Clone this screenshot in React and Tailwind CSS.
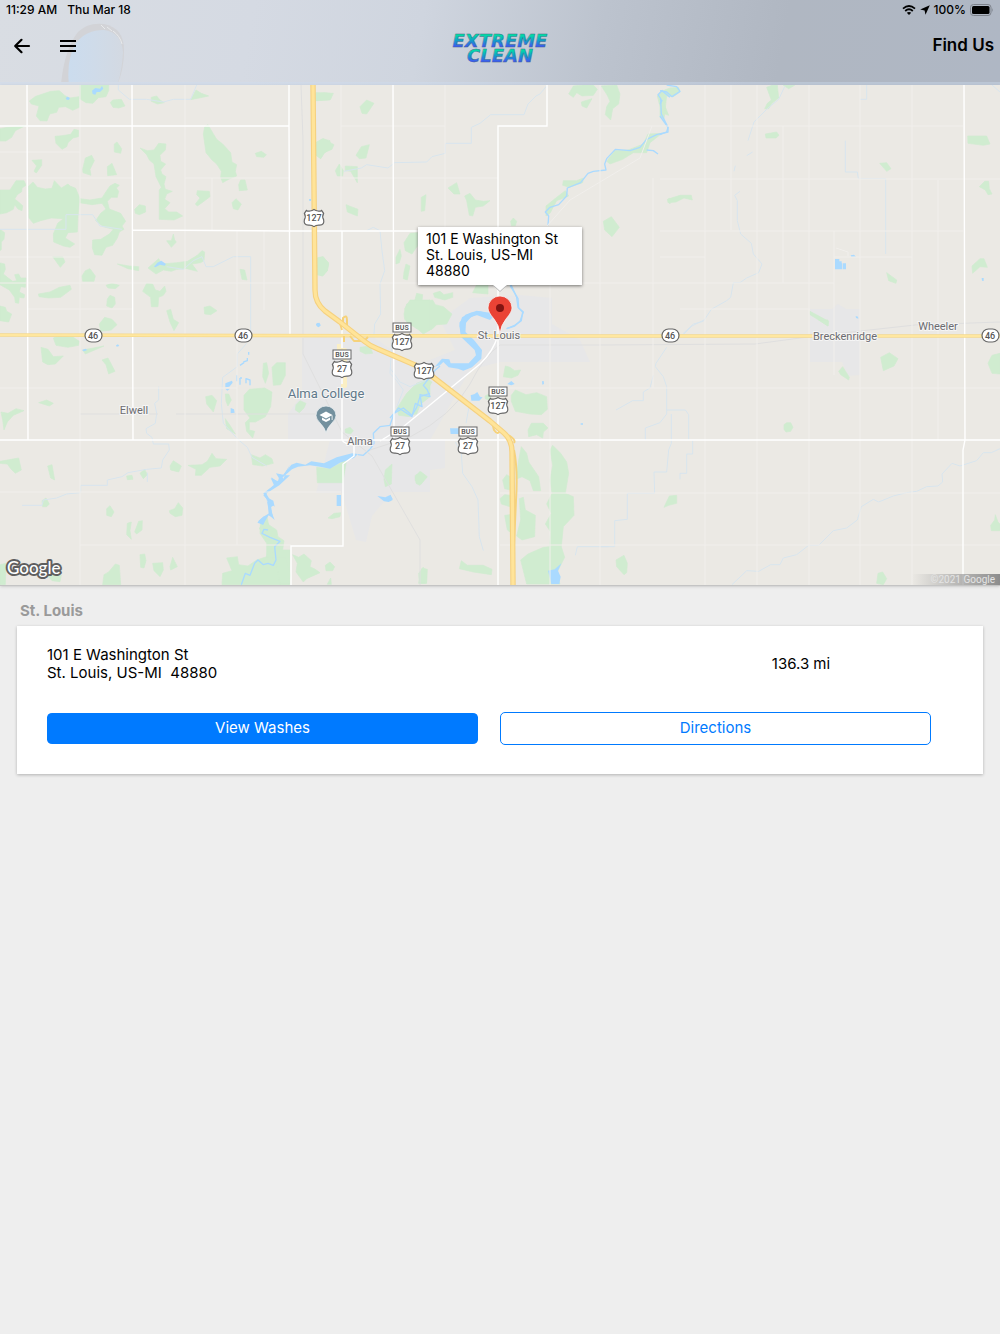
import React from 'react';

// Land features are traced in tiles at three units per map unit
const mapTiles = [
  {
    x: 0,
    y: 84,
    parks:
      'M88 51L107 37 152 22 178 20 195 35 209 42 237 38 238 70 218 79 197 68 176 70 170 85 149 90 141 111 120 110 109 96 117 66 94 60ZM239 3H326V20L318 38 295 41 279 58 258 56 239 44ZM331 56L338 48 364 46 375 66 356 72 339 70ZM0 134L22 130 76 125 46 140 35 160 18 171 0 171ZM165 157L186 155 212 151 222 136 236 139 235 158 219 162 204 176 200 188 186 196 168 178ZM96 229L125 227 125 244 109 267 102 262 110 246ZM343 180L351 174 365 194 362 208 343 204ZM248 256L256 222 275 214 283 230 270 256 273 274 249 266ZM322 248L336 238 350 272 323 275ZM0 318L30 318 48 290 72 290 78 304 66 312 65 323 52 332 44 345 53 352 68 365 66 380 54 375 44 362 40 376 20 386 0 390ZM86 306L99 294 112 310 136 315 156 313 163 290 184 312 204 300 210 306 227 313 240 344 270 348 306 342 320 320 330 306 345 298 358 304 349 312 356 322 352 340 334 340 322 352 328 375 362 388 377 412 366 426 372 436 358 444 352 462 338 484 318 490 306 514 284 512 277 492 278 468 302 466 328 450 340 436 310 428 287 410 302 388 318 375 306 358 276 362 238 356 234 396 232 444 204 446 196 462 224 480 210 490 190 486 161 474 160 450 173 418 190 404 154 402 122 410 100 418 87 402ZM158 518L188 518 195 534 181 550ZM0 436L14 446 12 466 4 474 4 496 0 500ZM0 537L14 540 16 556 10 570 22 580 38 592 50 590 44 572 56 570 62 582 78 582 76 610 62 608 58 624 74 632 72 642 58 640 56 658 46 656 44 640 28 618 0 602ZM246 576L256 560 270 554 286 576 282 592 248 592ZM318 604L336 598 358 604 346 614 324 612ZM115 630L150 624 178 610 210 604 214 616 182 640 146 642 117 638ZM0 666L16 670 20 682 35 690 26 714 0 710ZM322 645L330 634 344 640 346 660 336 672 320 666ZM298 720L314 700 336 706 351 722 334 738 302 742ZM454 40L470 36 480 48 493 56 472 60 454 52ZM572 47L588 18 604 28 626 36 598 42ZM420 192L442 200 462 198 476 178 498 180 496 198 480 214 482 232 497 240 482 258 486 270 498 278 492 300 496 316 517 322 500 330 494 346 510 356 494 374 506 384 530 384 548 396 522 408 478 406 478 318 484 310 468 278 462 240 448 228 440 212ZM610 150L614 128 624 122 638 146 650 166 668 180 692 206 696 234 710 242 706 262 710 276 686 286 668 296 662 280 664 262 650 240 636 228 618 206ZM716 302L722 288 735 288 742 318 718 320ZM592 320L628 322 630 338 606 356 592 366 586 360 600 342 590 332ZM696 356L708 344 724 360 714 378 700 374ZM766 208L784 202 799 212 792 220 770 218ZM404 376L418 362 436 366 437 384 418 392 406 388ZM500 470L514 470 520 450 524 468 529 474 514 490ZM444 552L476 524 486 540 530 536 562 532 592 514 606 500 614 504 612 530 602 536 576 540 592 562 560 554 530 556 514 562 490 558 468 570ZM352 540L388 546 416 548 416 560 384 554ZM428 622L440 598 458 600 466 618 480 622 494 606 498 622 490 634 476 640 474 668 454 668 452 640ZM720 556L734 558 741 588 726 586ZM612 670L630 666 651 680 632 692 614 690ZM500 680L512 676 520 706 536 716 522 740 510 714ZM947 28L975 26 990 28 990 48 950 50ZM947 176L968 164 990 170 990 196 974 206 962 224 948 212ZM950 524L970 518 986 540 982 560 968 576 950 570Z',
    water: 'M197 42L203 38 210 42 206 48 200 47ZM276 20L286 12 300 14 306 6 310 14 300 24 290 24 286 32 278 30ZM462 548L472 536 484 530 498 540 494 545 480 542 466 550ZM948 720L956 716 962 724 956 728ZM928 345h5v5h-5Z',
    streams: 'M355 3V18L388 46H440L490 54 520 46H572L590 3M0 436H198V392H278L300 426 366 436M500 548L550 556 580 530 606 518 618 548 640 548 700 518H752V750',
  },
  {
    x: 300,
    y: 84,
    parks:
      'M48 26L100 28 92 46 48 50ZM180 68L200 48 222 58 200 90 186 88ZM48 176L70 164 102 182 96 196 72 206 62 224 48 214ZM168 214L184 188 208 182 198 222 178 224ZM106 260L118 240 130 260 128 276 112 276ZM136 246L172 248 172 296 152 262 136 260ZM138 362L174 376 172 396 142 384ZM50 522L68 518 86 536 82 560 68 576 50 572ZM444 312L470 296 480 330 462 330ZM364 340L378 332 374 380 364 382ZM494 336L510 328 526 348 550 352 570 350 550 366 526 370 518 396 508 394 500 350ZM806 30L820 6 850 3H880L892 16 880 34 846 36 830 26 820 40ZM844 54L876 44 860 72 846 66ZM904 6L950 3 960 30 956 60 938 74 932 108 916 92 920 68 930 52 922 34ZM1072 36L1086 18 1108 26 1086 44 1106 94 1088 88 1078 60ZM920 232L944 200 984 198 1030 180 1044 150 1086 148 1050 176 1040 206 1000 206 968 226 930 240ZM790 290L830 290 850 282 848 296 808 310 788 304ZM738 366L770 340 796 320 806 336 770 350 750 388 738 396ZM910 412L934 398 958 430 936 458 914 438ZM632 412L640 402 650 412 646 425 634 425ZM312 476L330 448 352 446V486L336 510 316 500ZM288 520L300 496 304 516 298 536 288 540ZM312 564L318 540 330 546 322 588 310 584ZM518 626L530 602H564V630ZM312 690L320 660 344 650 350 628 368 632 366 652 398 648 406 662 430 668 456 690 440 720 410 722 396 736 380 740 350 734 326 718 314 706ZM400 628L420 622 432 632 458 626 458 640 434 648 404 640ZM1104 346L1110 342V360Z',
    water: 'M478 725L486 700 512 686 540 682 570 690 566 702 536 692 514 698 498 716 496 750 482 750ZM48 720L58 716 62 724 56 730 50 726ZM28 345h5v5h-5Z',
    streams: 'M740 6L720 30 708 36 684 60 672 92H572L540 118 514 130V178H436V208L396 218 380 234 284 236 264 252 200 242 184 252 132 262M200 440L220 430 240 440 246 500 254 560 240 600 242 690 224 720 222 750',
    rivers: 'M1110 40L1086 20 1074 32 1082 44 1084 90 1104 130 1104 144 1070 152 1040 166 1020 190 990 200 946 196 920 224 914 240 918 258 880 262 864 268 842 296 802 312 800 336 776 362 750 370 736 384 746 396 744 424M1040 198L1060 200 1074 210M632 600L650 640 654 670 668 684 664 710 644 724 620 734',
  },
  {
    x: 660,
    y: 84,
    parks:
      'M320 10L336 4H352L356 42 336 58 326 74 314 74 322 58 334 48ZM370 4H404L386 14ZM316 150L350 144 357 154 348 162 318 162ZM22 346L60 334 94 334 97 348 72 342 48 354 24 356ZM659 238L680 236 693 254 680 262ZM923 156L980 156 990 180 970 184 924 178ZM958 308L974 292 986 292 988 314 996 330 984 332 976 318ZM936 546L960 524 972 524 982 550 960 548 938 568ZM680 566L710 588 708 598 686 590ZM450 682L506 712 504 726 476 708 450 692ZM0 38L14 18 30 12 56 10 60 24 40 38 20 36 12 106 0 100Z',
    water: 'M525 525H538V532H545V556H525ZM537 538H546V556H537ZM548 538H558V556H548ZM572 514L582 512 588 518 574 519ZM587 696L594 698 595 704 588 702ZM965 582L971 582 971 591 966 590Z',
    streams: 'M374 8L356 46 322 74 282 114 264 170M278 204L260 215M240 322L224 334 232 350V410L242 450 274 478 280 510 306 540 296 566 260 582 240 596H220L212 640 200 650 154 676 130 712 100 720 68 750M620 3V46H600M556 170V264H592L595 284H677V510M996 3L1020 24M226 245L222 262',
    rivers: 'M0 20L20 24 36 38 60 22 50 8 20 3M0 60L6 50 0 44M0 96L24 130 20 144 0 152',
  },
  {
    x: 0,
    y: 330,
    parks:
      'M160 24L174 18H214L238 34 236 46 204 52 168 46ZM123 52L144 58 160 80 190 78 166 102 144 104 128 96ZM248 60L312 48 270 66 256 72ZM306 90L324 84 345 124 326 132 318 104ZM116 218L140 210 160 220 148 228ZM3 246L24 250 48 236 72 242 40 256 22 276 12 300 8 270ZM0 394L56 384 64 420 46 430 32 416 22 402 0 400ZM143 408L156 404 164 450 152 444ZM126 512L138 504 148 522 140 530 128 530ZM380 438L396 436 399 448 382 449ZM420 430L434 418 442 434 430 446ZM510 408L520 392 544 408 536 426 512 420ZM564 406L606 404 622 394 636 370 648 386 680 388 660 408 630 412 604 436 586 436 588 418ZM617 200L636 196 650 212 640 246 620 222ZM676 192L686 192 694 210 684 228 678 214ZM790 100L800 98 806 130 796 160 788 140ZM816 112L830 98 856 98 856 136 842 164 820 166ZM732 196L748 178 794 174 816 186 812 230 796 260 766 276 748 276 748 300 764 304 758 324 740 304 736 278 750 264 732 240ZM676 266L690 286 706 312 680 296ZM754 374L780 384 796 374 816 386 820 400 788 408 758 404ZM508 542L524 536 535 518 548 534 546 556 526 560 510 550ZM320 536L330 527 342 546 334 560 320 556ZM382 580L394 576 390 602 394 628 380 614ZM404 606L416 574 427 572 426 600 410 612ZM308 764L312 734 326 726 346 702 358 706 362 764ZM420 674L434 672 438 692 432 714 422 712ZM458 700L488 698 490 720 480 740 462 722ZM510 710L518 682 532 710 512 720ZM680 684L712 680 716 704 744 708 770 690 800 680 800 640 780 610 782 570 800 556 806 584 830 600 834 620 852 632 848 660 870 660V764H666L668 730 696 722ZM0 704L18 700 16 764H0ZM142 736H184L180 755 156 752Z',
    water: 'M246 60L256 56 262 60 252 64ZM348 46L354 43 358 48 350 50ZM676 160L696 152 698 158 688 170 676 172ZM676 176H690L682 182ZM692 234L702 238 704 248 692 250ZM870 404L850 436 870 436 838 466 800 490 798 500 820 512 824 530 812 520 816 550 824 570 804 552 790 584 772 578 790 560 806 554 804 516 790 490 822 466 816 452 812 444 834 454 840 432 850 446Z',
    streams: 'M740 40L712 72V110L668 142 664 220 670 280 716 330 742 352 756 382 800 408M476 170V210L464 220 470 250 466 280 438 296 440 310 456 322 460 342H506L508 360 488 390 484 414 440 418 384 428 366 440 322 450V466H242V488L200 492 170 504 130 510 126 526H66M442 428V456',
    rivers: 'M746 66V74M742 84V92L730 96M732 98L720 106M710 136V154M720 144V164M720 144H726M738 160V146L750 150V166M724 764L736 730 750 736 764 700 774 690 790 704 804 700 820 706 828 690 824 650 840 634 810 622 786 610 792 598 804 600',
  },
  {
    x: 230,
    y: 300,
    parks:
      'M390 142L420 138 428 160 406 162 390 154ZM524 26L540 0H600V90L580 102 550 76 530 66ZM345 388L360 382 370 392 362 402 346 398ZM198 314L210 302 228 310 222 324 208 338 196 330ZM500 324L540 300 556 270 580 250 600 240V290L560 322 540 350 506 346ZM462 538L466 510 486 492 484 552 466 560ZM556 526L574 516 592 530 574 552 556 542ZM260 502L300 506 348 480 352 470 338 548H262ZM294 654L312 640 332 638 330 650 306 656ZM286 796L300 786 314 800 308 812 288 812ZM188 764L206 772 222 762 244 782 240 800 256 808 270 818 230 836 220 846 198 816 202 790ZM566 850L576 804 592 808 590 850ZM292 853L302 834 304 853ZM110 770L152 740 150 720 130 700 110 664 88 684 100 710 118 722 110 770 166 770 182 826 176 853H150L136 780Z',
    water: 'M184 494L200 488 226 494 244 484 282 490 320 472 366 460 384 462 372 474 330 488 300 506 270 500 240 496 204 500 186 508 160 530 130 560 108 580 118 596 132 616 122 622 116 604 100 586 112 572 138 550 130 546 124 532 140 544 150 540 138 520 160 524ZM110 600L122 622 130 654 116 646 98 674 84 664 100 650 118 640ZM320 585H333V618H320ZM442 588L466 592 482 584 488 600 476 606 462 604ZM258 74L264 68 270 74 264 80Z',
    streams: 'M486 120L480 220 500 242 520 270 500 322',
    rivers: 'M384 464L400 466 420 448 432 430 430 400 450 380 480 376 492 340 520 324 546 346 560 322 570 290 600 280',
  },
  {
    x: 390,
    y: 280,
    parks:
      'M340 290L346 258 360 262 374 272 392 270 384 286 364 294ZM364 346L376 330 408 344 440 338 470 350 472 388 454 404 420 402 376 394 364 364ZM414 450L424 430 460 430 474 444 460 456 458 474 440 464 416 470ZM285 348L302 340V362L286 356ZM378 598L386 540 394 500 410 520 416 546 446 590 452 632 430 632 420 602 396 590ZM480 510L488 496 512 520 530 546 536 580 526 640 550 650 552 706 520 740 514 800 524 832 500 880 510 912H410L392 840 414 822 460 802 478 800 482 756 466 732 484 700 470 672 486 640 480 600 488 556ZM388 656L400 652 406 690 436 706 434 770 396 780 380 768 392 720ZM338 600L350 584 360 590 360 630 344 626ZM330 656L344 644 360 646V680L334 672ZM344 706L360 704V756L352 750ZM208 866L214 842 232 856 280 856 306 868 304 884 250 876ZM76 590L90 574 110 592 100 602 90 616 78 610ZM24 380L50 340 80 310 110 298 126 306 100 350 80 402 50 406ZM88 910L86 880 100 862 110 884 108 910Z',
    water: 'M208 128L226 104 260 92 300 98 310 110 300 120 258 104 232 118 220 150 252 180 276 210 274 236 246 262 220 272 204 266 176 262 160 246 150 256 134 260 156 236 178 238 182 250 236 250 258 226 254 210 214 172ZM242 346L254 342 262 336 270 350 278 352 268 362 244 362ZM352 312L364 303 374 312 364 316ZM456 304L461 303 462 312 457 314ZM180 445H206V462H182ZM474 872L494 868 514 850 504 872 512 890 508 912H484ZM572 430h7v4h-7ZM0 646L8 656 0 664Z',
    streams: 'M0 264L30 306 60 320 110 300M196 486L214 520 218 580 246 620 264 660 268 770 280 812M240 364L228 430M556 826L562 800H656',
    rivers: 'M360 16L384 56 386 84 400 96 390 124 374 138 350 146M0 414L26 384 66 410 76 370 96 380 90 344 120 350 112 330 100 316 136 270 150 258',
  },
  {
    x: 600,
    y: 320,
    parks:
      'M842 112L868 98 894 116 882 138 850 152ZM716 154L728 140 748 172 746 180 722 164ZM1164 130L1176 106 1200 100V162L1176 160ZM552 314L560 308H572L579 322 572 334 558 336 552 328ZM192 562L208 528 230 526 230 550 206 556ZM48 720L72 706 82 730 80 758 72 764 50 740ZM830 790L834 760 848 756 860 776 850 794ZM1172 616L1184 600 1186 584 1194 606 1200 612V632H1174ZM656 0H684V18Z',
    water: '',
    streams:
      'M200 82L168 130 166 140 190 170 200 200V282L180 308 136 324V360M160 166L150 204 130 216V242H98L48 270M200 270H256L266 284V360M214 282V370L206 390 200 456H162L164 520H82V598L44 602V680H0M278 362V402H260V460H240V478M312 0L276 18 252 42M396 794L440 752 476 754 512 734H540L550 714 590 704 626 676H656L700 632 740 624 772 600 784 560 820 538 836 546 880 528 920 518 950 514 980 500 1014 498 1028 486 1026 462 1056 430 1080 438 1130 422 1150 398H1174L1200 386',
  },
];

const shields = [
  { x: 314, y: 218, route: '127' },
  { x: 402, y: 342, route: '127', bus: true },
  { x: 342, y: 369, route: '27', bus: true },
  { x: 424, y: 371, route: '127' },
  { x: 498, y: 406, route: '127', bus: true },
  { x: 400, y: 446, route: '27', bus: true },
  { x: 468, y: 446, route: '27', bus: true },
];

const stateRoutes = [93, 243, 670, 990];

const towns = [
  { name: 'Elwell', x: 134, y: 414 },
  { name: 'Alma', x: 360, y: 445 },
  { name: 'St. Louis', x: 499, y: 339 },
  { name: 'Breckenridge', x: 845, y: 340 },
  { name: 'Wheeler', x: 938, y: 330 },
];

const highway =
  'M313 85L315 290Q315 303 325 311L340 322 364 341Q370 346 378 349L415 365Q424 369 433 377L490 421 504 433Q512 440 512 452L513 585';
const ramps =
  'M339 320L342 330M343 326V318Q347 314 347 320V327M350 336L354 341H364L368 337M492 422L494 430Q498 436 500 430M504 434L510 436Q516 440 514 443M514 450Q518 470 516 500L514 545M344 336V342';

const TileLayer = ({ layer, ...rest }) => (
  <g {...rest}>
    {mapTiles.map((tile) => (
      <path
        key={`${tile.x}-${tile.y}`}
        transform={`translate(${tile.x} ${tile.y}) scale(0.33333)`}
        d={tile[layer]}
      />
    ))}
  </g>
);

const UsShield = ({ x, y, route, bus }) => (
  <g transform={`translate(${x} ${y})`} textAnchor="middle" fill="#555">
    <path
      d="M-9.6-4.6L-7.6-7.6Q-6-6.4-4-7Q-1.8-7.4 0-8.6Q1.8-7.4 4-7Q6-6.4 7.6-7.6L9.6-4.6Q7.8-1.4 9.6 1.6Q10.8 6.8 5.6 7.2Q2 7 0 8.6Q-2 7-5.6 7.2Q-10.8 6.8-9.6 1.6Q-7.8-1.4-9.6-4.6Z"
      fill="#fff"
      stroke="#666"
      strokeWidth="1.2"
    />
    <text y="3" fontSize="9" fontWeight="500">{route}</text>
    {bus && (
      <>
        <rect x="-9" y="-19" width="18" height="9" fill="#fff" stroke="#666" />
        <text y="-12" fontSize="7" fontWeight="600">BUS</text>
      </>
    )}
  </g>
);

const MapCanvas = () => (
  <svg
    viewBox="0 85 1000 500"
    preserveAspectRatio="xMidYMid slice"
    className="block h-full w-full font-['Roboto',sans-serif]"
    role="img"
    aria-label="Map of St. Louis and Alma"
  >
    <defs>
      <linearGradient id="copyright-fade">
        <stop offset="0" stopColor="#999" stopOpacity="0" />
        <stop offset="0.5" stopColor="#999" stopOpacity="0.6" />
        <stop offset="1" stopColor="#8c8c8c" />
      </linearGradient>
    </defs>
    <rect y="85" width="1000" height="500" fill="#ebe9e4" />

    {/* Built-up areas */}
    <g fill="#e7e7e8">
      <path d="M302 336H372L415 366 455 350 440 320 470 298 520 295 552 298V324L580 340 590 362H500L470 370 430 440H445V468L430 470V492H392L372 516 366 542 356 540 344 500V493H316L330 440H288V414L302 394Z" />
      <path d="M810 309H832L838 304 846 309H860V375L848 376 842 362H810Z" />
    </g>

    <TileLayer layer="parks" fill="#d0ecd0" stroke="#d0ecd0" strokeWidth="2" strokeLinejoin="round" />
    <TileLayer layer="streams" fill="none" stroke="#d8e5ee" strokeWidth="3" strokeLinejoin="round" />
    <TileLayer layer="water" fill="#aadaff" />
    <TileLayer layer="rivers" fill="none" stroke="#aadaff" strokeWidth="4" strokeLinejoin="round" />

    {/* Rail lines */}
    <path
      d="M80 414H158M176 414H318M303 338V354L342 432 372 456 420 540V585M500 345H600L755 344 815 336 915 325 1000 322M500 345Q484 356 470 384Q452 416 410 437L370 450M301 85L303 140V335"
      fill="none"
      stroke="#dfdfdf"
    />

    {/* Back roads */}
    <path
      d="M80 85V585M185 85V585M212 178V230M237 230V545M264 230V310M445 85V230M600 85V585M653 178V388M705 85V585M731 85V230M757 85V585M783 126V283M809 85V585M834 231V375M860 85V585M912 85V585M938 180V440M550 283V585M341 85V231M0 152H80M0 178H132M185 178H289M341 126H445M600 126H963M660 179H1000M0 257H80M0 283H289M341 283H418M582 283H834M28 309H132M660 231H963M660 257H705M834 257H912M680 309H810M0 388H237M500 388H1000M0 492H341M500 493H1000M80 545H291M500 545H1000M341 178H498M836 248L848 252V256"
      fill="none"
      stroke="#f1efec"
    />
    <path d="M547 226L570 200 640 158 652 126" fill="none" stroke="#f1efec" />

    {/* Main roads */}
    <path
      d="M27 85L28 440M132 85L133 440M0 126H289M289 85V126L290 335M132 230L290 231H420M342 231V440Q344 444 354 445V456L343 464V546H291V585M393 85L394 440M547 85V126H498V585M0 440H1000M964 85L965 440 963 450V585M498 335Q493 352 480 364L403 427 380 441"
      fill="none"
      stroke="#fff"
      strokeWidth="1.4"
    />

    {/* Highways */}
    <g fill="none" strokeLinejoin="round">
      <path d="M339 344V350H345V386H341" stroke="#fbefc4" strokeWidth="4" />
      <path d="M0 335L500 336 1000 336" stroke="#f5d98d" strokeWidth="3.4" />
      <path d="M0 335L500 336 1000 336" stroke="#ffe79f" strokeWidth="1.8" />
      <path d={ramps} stroke="#f6d27a" strokeWidth="2" />
      <path d={highway} stroke="#f5d180" strokeWidth="5.4" />
      <path d={highway} stroke="#ffe499" strokeWidth="3.2" />
    </g>

    {shields.map((shield) => (
      <UsShield key={`${shield.x}-${shield.y}`} {...shield} />
    ))}
    {stateRoutes.map((x) => (
      <g key={x}>
        <rect x={x - 8} y="329" width="17" height="13" rx="6.5" fill="#fff" stroke="#666" strokeWidth="1.2" />
        <text x={x} y="339" fontSize="9" fontWeight="500" textAnchor="middle" fill="#555">46</text>
      </g>
    ))}

    {/* Place names */}
    <g fontSize="11" textAnchor="middle" fill="#6c6c70" stroke="#f5f5f5" strokeWidth="2" paintOrder="stroke">
      {towns.map((town) => (
        <text key={town.name} x={town.x} y={town.y}>{town.name}</text>
      ))}
      <text x="326" y="398" fontSize="13" fill="#61798a">Alma College</text>
    </g>

    {/* College pin */}
    <path
      d="M326 433Q325 428 320 423Q316 419 316 415.500A10 9.500 0 0 1 336 415.500Q336 419 332 423Q327 428 326 433Z"
      fill="#73909e"
      stroke="#e9eef0"
      strokeWidth="0.8"
    />
    <path d="M319.500 415L326 411.500 332.500 415 326 418.500ZM322 417.500L326 419.700 330 417.500V420L326 422 322 420ZM331.700 415.500H332.500V420H331.700Z" fill="#fff" />

    {/* Location marker */}
    <path
      d="M500 333.500Q499 325 494 319Q488 312 488 308A12 12 0 0 1 512 308Q512 312 506 319Q501 325 500 333.500Z"
      fill="#ea4335"
      stroke="#f8f4f2"
      strokeWidth="0.8"
    />
    <circle cx="500" cy="308" r="4" fill="#811411" />

    <text
      x="7"
      y="574"
      fontSize="17"
      fontWeight="500"
      fill="#fff"
      stroke="#5f5f5f"
      strokeWidth="4"
      strokeLinejoin="round"
      paintOrder="stroke"
      className="font-['Lato',sans-serif]"
    >
      Google
    </text>
    <rect x="912" y="574" width="88" height="11" fill="url(#copyright-fade)" />
    <text x="995" y="583" fontSize="10" textAnchor="end" fill="#e4e4e4">©2021 Google</text>
  </svg>
);

const StatusBar = () => (
  <div className="flex h-5 items-center justify-between px-1.5 text-[12px] font-medium">
    <div className="flex gap-2.5">
      <span>11:29 AM</span>
      <span>Thu Mar 18</span>
    </div>
    <div className="flex items-center gap-1">
      <svg width="14" height="10" viewBox="0 0 14 10" fill="none" stroke="#000" strokeWidth="1.8">
        <path d="M1 3.600Q7-1.600 13 3.600M3.200 6Q7 2.600 10.800 6" />
        <path d="M7 10L4.800 7.800Q7 6 9.200 7.800Z" fill="#000" stroke="none" />
      </svg>
      <svg width="10" height="10" viewBox="0 0 10 10">
        <path d="M9.800 0.200L5.500 9.800 4.600 5.400 0.200 4.500Z" />
      </svg>
      <span>100%</span>
      <svg width="24" height="12" viewBox="0 0 24 12">
        <rect x="0.500" y="0.500" width="20.500" height="11" rx="3" fill="none" stroke="#7d828b" />
        <rect x="2" y="2" width="17.500" height="8" rx="1.500" />
        <path d="M22 4Q23.500 6 22 8Z" fill="#7d828b" />
      </svg>
    </div>
  </div>
);

const Logo = () => (
  <svg width="104" height="40" viewBox="0 0 104 40" role="img" aria-label="Extreme Clean">
    <defs>
      <linearGradient id="logo-fill" x1="0" y1="0" x2="0" y2="1">
        <stop offset="0.2" stopColor="#00e6a0" />
        <stop offset="0.5" stopColor="#129fc8" />
        <stop offset="0.8" stopColor="#4254f4" />
      </linearGradient>
    </defs>
    <g
      fill="url(#logo-fill)"
      stroke="#3d6b8c"
      strokeWidth="0.4"
      textAnchor="middle"
      fontSize="18"
      fontWeight="700"
      fontStyle="italic"
      className="font-['DejaVu_Sans',sans-serif]"
    >
      <text x="52" y="19">EXTREME</text>
      <text x="52" y="34">CLEAN</text>
    </g>
  </svg>
);

const Header = () => (
  <header className="relative overflow-hidden border-b-3 border-[#cddcf0]/40 bg-[linear-gradient(100deg,#d9dde3_0%,#d5dae3_25%,#cfd5df_42%,#bcc3ce_60%,#b0b7c2_78%,#afb7c4_100%)]">
    {/* Balloon behind the navigation */}
    <svg className="absolute left-15 top-5 h-[65px] w-[70px]" viewBox="60 20 70 65" aria-hidden="true">
      <defs>
        <linearGradient id="balloon" x1="0" x2="1">
          <stop offset="0" stopColor="#cbdcee" />
          <stop offset="0.5" stopColor="#cfdbe9" />
          <stop offset="1" stopColor="#d3d9e2" />
        </linearGradient>
      </defs>
      <path d="M61 85Q64 50 78 32Q88 22 104 24Q124 28 124 50Q124 70 117 85Z" fill="#d2d3d7" />
      <path d="M69 85Q66 60 76 43Q86 30 104 30Q121 32 123 52Q122 72 117 85Z" fill="url(#balloon)" />
      <path d="M101 25L105 29M107 27L112 31M113 31Q120 36 122 44" fill="none" stroke="#e8eaec" />
    </svg>
    <div className="relative pb-2.5">
      <StatusBar />
      <nav className="grid h-[52px] grid-cols-3 items-center px-1.5">
        <div className="flex items-center gap-[26px] pl-1.5">
          <button type="button" aria-label="Back">
            <svg width="20" height="20" viewBox="0 0 20 20" fill="none" stroke="#000" strokeWidth="2.200" strokeLinecap="round" strokeLinejoin="round">
              <path d="M17 10H3.500M9.500 3.800L3.200 10 9.500 16.200" />
            </svg>
          </button>
          <button type="button" aria-label="Menu">
            <svg width="20" height="20" viewBox="0 0 20 20" stroke="#000" strokeWidth="2.200">
              <path d="M2 5H18M2 10H18M2 15H18" />
            </svg>
          </button>
        </div>
        <a href="#home" className="flex justify-center pt-1">
          <Logo />
        </a>
        <h1 className="text-right text-[17px] font-semibold">Find Us</h1>
      </nav>
    </div>
  </header>
);

const App = () => {
  return (
    <div className="min-h-screen bg-[#eeeeee] font-['Inter',sans-serif] text-black">
      <Header />

      <section className="relative w-full border-b border-[#c4c4c4] shadow-sm">
        <div className="aspect-[2/1] w-full">
          <MapCanvas />
        </div>
        {/* Marker callout */}
        <div className="absolute bottom-[60%] left-1/2 w-[164px] -translate-x-1/2 bg-white px-2 pt-1 pb-1.5 text-[14px] leading-4 shadow-[0_1px_3px_rgba(0,0,0,0.5)]">
          101 E Washington St
          <br />
          St. Louis, US-MI
          <br />
          48880
          <svg className="absolute left-1/2 top-full -ml-[7px]" width="14" height="7" viewBox="0 0 14 7">
            <path d="M0 0H14L7 7Z" fill="#fff" />
            <path d="M0.500 0.500L7 6.500 13.500 0.500" fill="none" stroke="#b5b5b5" />
          </svg>
        </div>
      </section>

      <main className="px-[17px] pt-4">
        <h2 className="px-[3px] pb-1.5 text-[15px] leading-[18px] font-bold text-[#9a9a9a]">St. Louis</h2>
        <article className="bg-white px-[30px] pt-5 pb-[29px] shadow-[0_1px_3px_rgba(0,0,0,0.25)]">
          <div className="grid grid-cols-5 items-center text-[15px] leading-[18px]">
            <address className="col-span-4 whitespace-pre not-italic">
              101 E Washington St
              <br />
              {'St. Louis, US-MI  48880'}
            </address>
            <span>136.3 mi</span>
          </div>
          <div className="mt-[30px] grid grid-cols-2 text-[15px]">
            <div className="pr-[22px]">
              <button type="button" className="h-[33px] w-full rounded-[5px] border-y border-transparent bg-[#007aff] bg-clip-padding text-white">
                View Washes
              </button>
            </div>
            <div className="pr-[22px]">
              <button type="button" className="h-[33px] w-full rounded-[5px] border border-[#007aff] text-[#007aff]">
                Directions
              </button>
            </div>
          </div>
        </article>
      </main>
    </div>
  );
};

export default App;
